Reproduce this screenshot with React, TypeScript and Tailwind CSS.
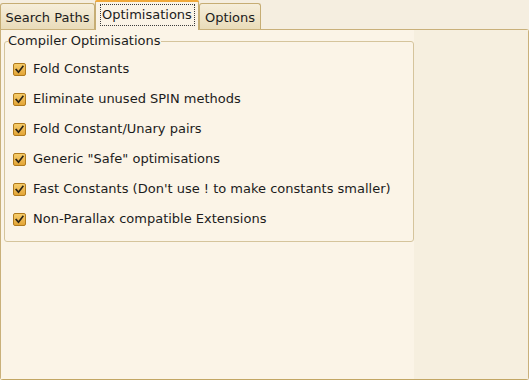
import React from "react";

const items = [
  "Fold Constants",
  "Eliminate unused SPIN methods",
  "Fold Constant/Unary pairs",
  'Generic "Safe" optimisations',
  "Fast Constants (Don't use ! to make constants smaller)",
  "Non-Parallax compatible Extensions",
];

function Check() {
  return (
    <span className="w-[13px] h-[13px] rounded-[2px] border border-[#b07a1c] bg-gradient-to-b from-[#f7cd6a] to-[#e2a435] flex items-center justify-center shrink-0">
      <svg width="9" height="9" viewBox="0 0 9 9">
        <path d="M1.2 4.6 L3.5 7.2 L7.9 1.4" fill="none" stroke="#2a2418" strokeWidth="1.7" strokeLinecap="square" />
      </svg>
    </span>
  );
}

export default function App() {
  return (
    <div
      className="w-[529px] h-[380px] bg-[#f5eee0] flex flex-col text-[13px] leading-[16px] text-[#1c1c1c]"
      style={{ fontFamily: '"DejaVu Sans", "Liberation Sans", sans-serif' }}
    >
      <div className="flex items-end h-[30px]">
        <div className="w-[95px] h-[27px] border border-b-0 border-[#c6ad74] rounded-t-[3px] bg-gradient-to-b from-[#f6eedb] to-[#e9dbb8] flex justify-center pt-[6px]">
          Search Paths
        </div>
        <div className="relative z-10 w-[104px] h-[30px] border-x border-[#c6ad74] rounded-t-[3px] bg-[#faf3e6] flex flex-col">
          <div className="h-[2px] bg-[#f0a93a] rounded-t-[2px] -mx-px"></div>
          <div className="flex pl-[4px] pt-[2px]">
            <span className="border border-dotted border-[#3a3a3a] px-[1px] py-[2px] w-[95px]">Optimisations</span>
          </div>
        </div>
        <div className="w-[62px] h-[27px] border border-b-0 border-[#c6ad74] rounded-t-[3px] bg-gradient-to-b from-[#f6eedb] to-[#e9dbb8] flex justify-center pt-[6px]">
          Options
        </div>
      </div>
      <div className="flex-1 -mt-px border border-[#c9b07a] border-b-[#c2a664] rounded-b-[3px] rounded-tr-[3px] flex">
        <div className="w-[413px] bg-[#fbf4e7] pt-[3px] pl-[3px]">
          <fieldset className="border border-[#d5c49c] rounded-[3px] w-[410px] pl-[8px] pt-[5px] pb-[7px]">
            <legend className="-ml-[5px] px-0 leading-[16px]">Compiler Optimisations</legend>
            {items.map((t) => (
              <div key={t} className="h-[30px] flex items-center gap-[7px]">
                <Check />
                <span>{t}</span>
              </div>
            ))}
          </fieldset>
        </div>
        <div className="flex-1 bg-[#f6efdf]"></div>
      </div>
    </div>
  );
}
